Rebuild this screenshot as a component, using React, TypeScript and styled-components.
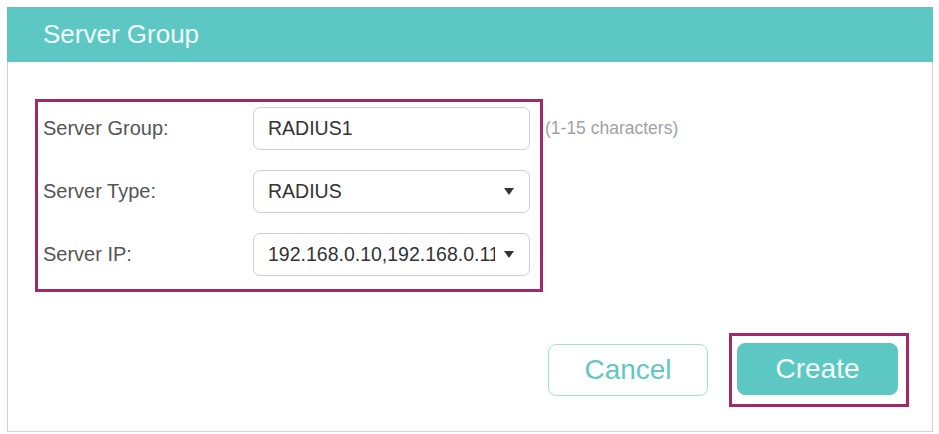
import React from "react";
import styled, { createGlobalStyle } from "styled-components";

const GlobalStyle = createGlobalStyle`
  html, body {
    margin: 0;
    background: #ffffff;
  }
  body {
    padding: 7px 6px 0 7px;
    font-family: "Liberation Sans", Arial, sans-serif;
  }
`;

const TEAL = "#5dc7c3";
const MARK = "#a3286b";

const Panel = styled.div`
  width: 926px;
  height: 425px;
  box-sizing: border-box;
  border: 1px solid #d2d2d2;
  border-top: none;
  background: #ffffff;
  display: flex;
  flex-direction: column;
`;

const Header = styled.div`
  height: 55px;
  margin: 0 -1px;
  background: ${TEAL};
  display: flex;
  align-items: center;
  padding-left: 36px;
  color: #effcfb;
  font-size: 26px;
`;

const Body = styled.div`
  display: flex;
  flex-direction: column;
  padding: 37px 23px 0 27px;
`;

const FormArea = styled.div`
  display: flex;
  align-items: flex-start;
`;

const Highlight = styled.div`
  border: 3px solid ${MARK};
  padding: 5px 10px 13px 5px;
  display: flex;
  flex-direction: column;
  gap: 20px;
`;

const Row = styled.div`
  display: flex;
  align-items: center;
`;

const Label = styled.div`
  width: 210px;
  color: #555555;
  font-size: 20px;
`;

const Field = styled.div`
  width: 277px;
  height: 43px;
  box-sizing: border-box;
  border: 1px solid #cfcfcf;
  border-radius: 7px;
  display: flex;
  align-items: center;
  padding: 0 15px 0 14px;
  color: #333333;
  font-size: 19.5px;
  background: #ffffff;
`;

const FieldText = styled.span`
  flex: 1;
  min-width: 0;
  white-space: nowrap;
  overflow: hidden;
`;

const Caret = styled.span`
  flex: none;
  width: 0;
  height: 0;
  margin-left: 9px;
  border-left: 5.5px solid transparent;
  border-right: 5.5px solid transparent;
  border-top: 7px solid #333333;
`;

const Hint = styled.div`
  margin: 19px 0 0 2px;
  color: #a2a2a2;
  font-size: 17.5px;
`;

const Actions = styled.div`
  margin-top: 41px;
  display: flex;
  justify-content: flex-end;
  align-items: center;
  gap: 21px;
`;

const ButtonMark = styled.div`
  border: 3px solid ${MARK};
  padding: 7px 8px 9px 5px;
  display: flex;
`;

const Button = styled.button<{ $primary?: boolean }>`
  width: ${(p) => (p.$primary ? "161px" : "160px")};
  height: 52px;
  box-sizing: border-box;
  border-radius: 8px;
  border: 1.5px solid ${(p) => (p.$primary ? TEAL : "#a6dedb")};
  background: ${(p) => (p.$primary ? TEAL : "#ffffff")};
  color: ${(p) => (p.$primary ? "#f4fffe" : "#62c6c2")};
  font-family: "Liberation Sans", Arial, sans-serif;
  font-size: 28px;
  padding: 0;
  cursor: pointer;
`;

const fields = [
  { label: "Server Group:", value: "RADIUS1", select: false },
  { label: "Server Type:", value: "RADIUS", select: true },
  { label: "Server IP:", value: "192.168.0.10,192.168.0.11", select: true },
];

export default function App() {
  return (
    <>
      <GlobalStyle />
      <Panel>
        <Header>Server Group</Header>
        <Body>
          <FormArea>
            <Highlight>
              {fields.map((f) => (
                <Row key={f.label}>
                  <Label>{f.label}</Label>
                  <Field>
                    <FieldText>{f.value}</FieldText>
                    {f.select && <Caret />}
                  </Field>
                </Row>
              ))}
            </Highlight>
            <Hint>(1-15 characters)</Hint>
          </FormArea>
          <Actions>
            <Button>Cancel</Button>
            <ButtonMark>
              <Button $primary>Create</Button>
            </ButtonMark>
          </Actions>
        </Body>
      </Panel>
    </>
  );
}
